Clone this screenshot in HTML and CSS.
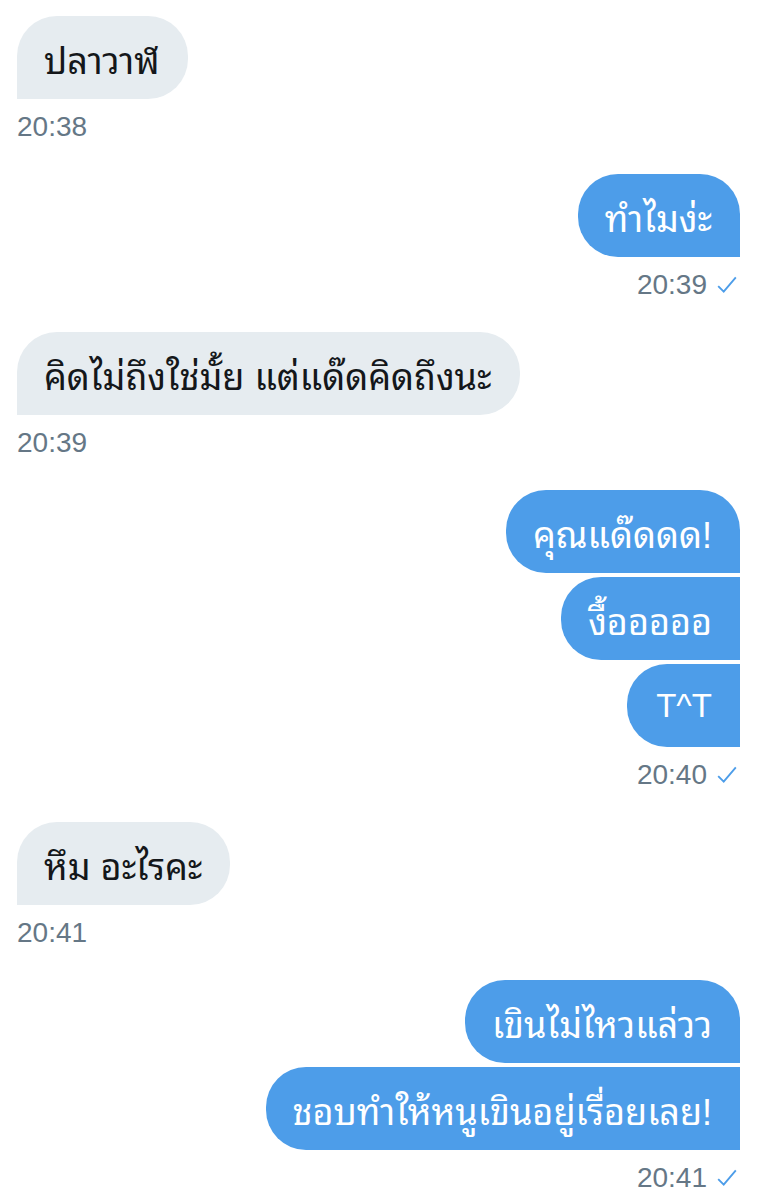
FILE: index.html
```html
<!DOCTYPE html>
<html lang="th">
<head>
  <meta charset="UTF-8">
  <meta name="viewport" content="width=device-width, initial-scale=1.0">
  <title>Messages</title>
  <link rel="stylesheet" href="styles.css">
</head>
<body>

  <div class="chat">

    <div class="group received">
      <div class="bubble">ปลาวาฬ</div>
      <div class="time">20:38</div>
    </div>

    <div class="group sent">
      <div class="bubble">ทำไมง่ะ</div>
      <div class="time">20:39 <svg class="check" viewBox="0 0 20 20"><path d="M2 11 L7 16 L18 3"/></svg></div>
    </div>

    <div class="group received">
      <div class="bubble">คิดไม่ถึงใช่มั้ย แต่แด๊ดคิดถึงนะ</div>
      <div class="time">20:39</div>
    </div>

    <div class="group sent">
      <div class="bubble">คุณแด๊ดดด!</div>
      <div class="bubble">งื้อออออ</div>
      <div class="bubble latin">T^T</div>
      <div class="time">20:40 <svg class="check" viewBox="0 0 20 20"><path d="M2 11 L7 16 L18 3"/></svg></div>
    </div>

    <div class="group received">
      <div class="bubble">หึม อะไรคะ</div>
      <div class="time">20:41</div>
    </div>

    <div class="group sent">
      <div class="bubble">เขินไม่ไหวแล่วว</div>
      <div class="bubble">ชอบทำให้หนูเขินอยู่เรื่อยเลย!</div>
      <div class="time">20:41 <svg class="check" viewBox="0 0 20 20"><path d="M2 11 L7 16 L18 3"/></svg></div>
    </div>

  </div>

</body>
</html>
```

FILE: styles.css
```css
body {
  margin: 0;
  background-color: #ffffff;
  font-family: "Liberation Sans", "Noto Sans Thai Looped", sans-serif;
}

.chat {
  display: flex;
  flex-direction: column;
  gap: 33px;
  padding: 16px 43px 0 17px;
}

.group {
  display: flex;
  flex-direction: column;
  gap: 4px;
}

.received {
  align-items: flex-start;
}

.sent {
  align-items: flex-end;
}

.bubble {
  height: 83px;
  display: flex;
  align-items: center;
  padding: 0 28px 0 27px;
  font-size: 36px;
  box-sizing: border-box;
  white-space: nowrap;
}

.bubble.latin {
  font-size: 33px;
  padding: 0 28px 0 29px;
}

.received .bubble {
  background-color: #e6ecf0;
  color: #14171a;
  border-radius: 40px 40px 40px 0;
}

.sent .bubble {
  background-color: #4d9de9;
  color: #ffffff;
  border-radius: 40px 0 0 40px;
}

.sent .bubble:first-child {
  border-top-right-radius: 40px;
}

.time {
  margin-top: 10px;
  height: 28px;
  display: flex;
  align-items: center;
  gap: 9px;
  font-size: 28px;
  line-height: 28px;
  color: #657786;
}

.check {
  width: 22px;
  height: 22px;
  margin-right: 2px;
  fill: none;
  stroke: #4d9de9;
  stroke-width: 1.7;
}
```
